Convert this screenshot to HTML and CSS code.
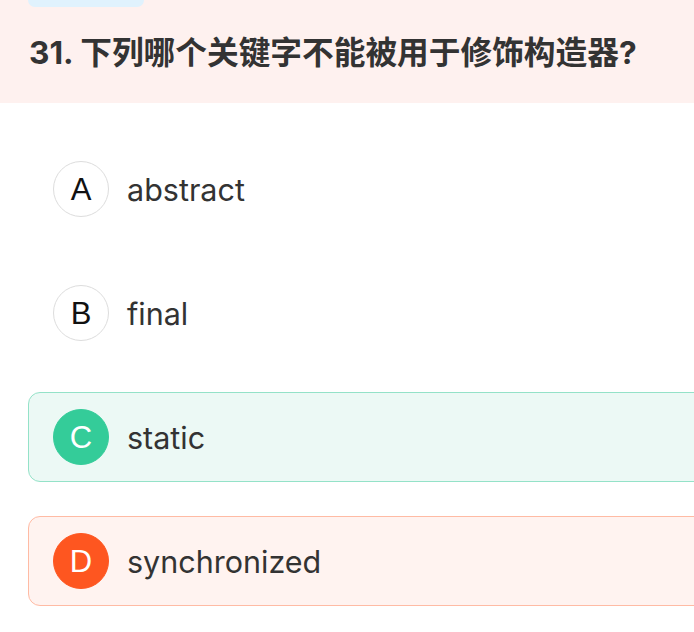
FILE: index.html
```html
<!DOCTYPE html>
<html lang="zh">
<head>
<meta charset="utf-8">
<link rel="stylesheet" href="styles.css">
</head>
<body>
<div class="header">
  <div class="tab"></div>
  <h1 class="title">31. 下列哪个关键字不能被用于修饰构造器?</h1>
</div>
<div class="options">
  <div class="option">
    <span class="letter">A</span>
    <span class="text">abstract</span>
  </div>
  <div class="option">
    <span class="letter">B</span>
    <span class="text">final</span>
  </div>
  <div class="option correct">
    <span class="letter">C</span>
    <span class="text">static</span>
  </div>
  <div class="option wrong">
    <span class="letter">D</span>
    <span class="text">synchronized</span>
  </div>
</div>
</body>
</html>
```
FILE: styles.css
```css
html, body {
  margin: 0;
  padding: 0;
  background: #ffffff;
  overflow: hidden;
}
body {
  font-family: "Inter", "Liberation Sans", "Noto Sans CJK SC", sans-serif;
  color: #333333;
}
.header {
  background: #fef1ef;
  height: 103px;
  padding: 0 29px;
  box-sizing: border-box;
}
.tab {
  width: 116px;
  height: 7px;
  margin-left: -1px;
  background: #e0f2fd;
  border-radius: 0 0 8px 8px;
}
.title {
  margin: 0;
  padding-top: 28px;
  font-size: 31.7px;
  line-height: 36px;
  font-weight: 700;
  color: #333333;
  font-family: "Inter", "Noto Sans CJK SC", sans-serif;
  white-space: nowrap;
}
.options {
  padding: 41px 0 0 28px;
  margin-right: -30px;
  display: flex;
  flex-direction: column;
  gap: 34px;
}
.option {
  height: 90px;
  box-sizing: border-box;
  border: 1.5px solid transparent;
  border-radius: 12px;
  display: flex;
  align-items: center;
  padding-left: 24px;
  gap: 18px;
}
.letter {
  width: 56px;
  height: 56px;
  box-sizing: border-box;
  border-radius: 50%;
  border: 1.5px solid #dddddd;
  display: flex;
  align-items: center;
  justify-content: center;
  padding-top: 2px;
  font-family: "Liberation Sans", sans-serif;
  font-size: 31px;
  font-weight: 400;
  color: #111111;
  flex: none;
}
.text {
  font-size: 30.5px;
  color: #333333;
}
.correct {
  background: #ecf9f5;
  border-color: #94e2c8;
}
.correct .letter {
  background: #34cc99;
  border-color: #34cc99;
  color: #ffffff;
}
.wrong {
  background: #fff3f0;
  border-color: #ffbba4;
}
.wrong .letter {
  background: #fe5620;
  border-color: #fe5620;
  color: #ffffff;
}
```
